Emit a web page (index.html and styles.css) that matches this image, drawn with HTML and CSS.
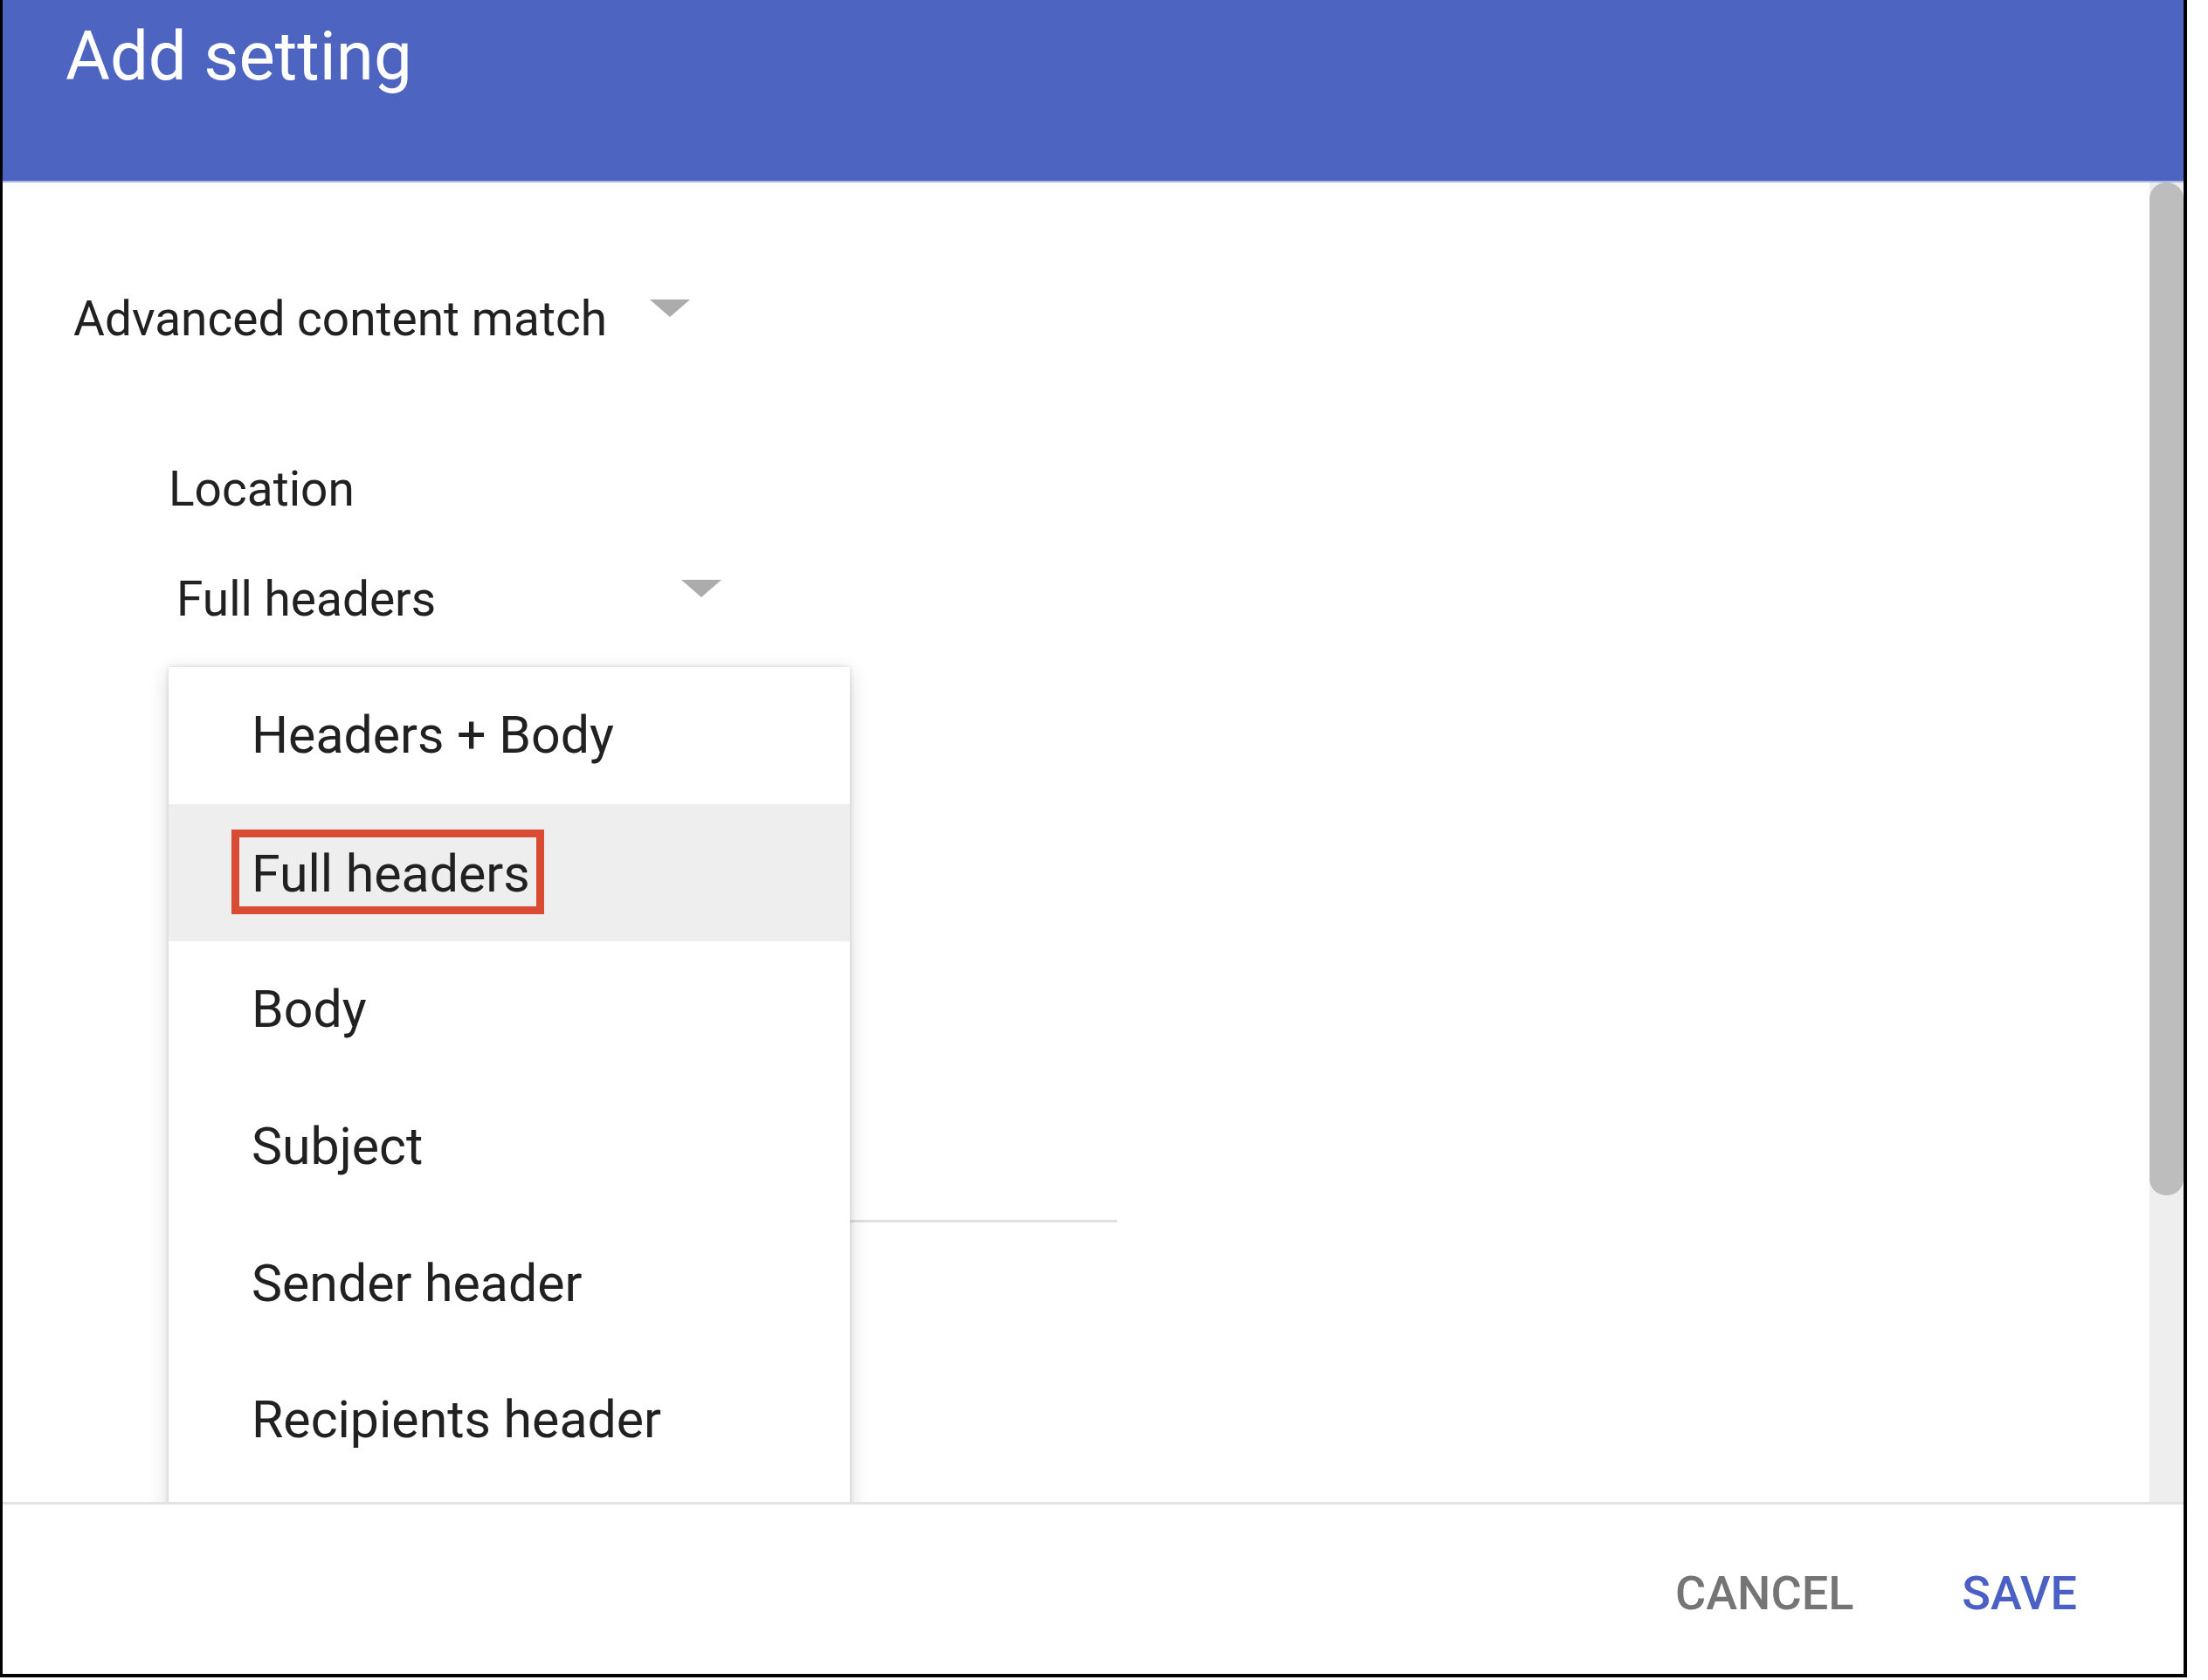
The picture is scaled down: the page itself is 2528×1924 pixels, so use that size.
FILE: index.html
```html
<!DOCTYPE html>
<html lang="en">
<head>
<meta charset="utf-8">
<title>Add setting</title>
<link rel="stylesheet" href="styles.css">
</head>
<body>
<div class="frame">
  <header class="dialog-header">
    <h1 class="dialog-title">Add setting</h1>
  </header>
  <div class="dialog-body">
    <div class="main">
      <div class="select select-top">
        <span class="select-value">Advanced content match</span>
        <span class="arrow arrow-top"></span>
      </div>
      <div class="field-label">Location</div>
      <div class="select select-location">
        <span class="select-value">Full headers</span>
        <span class="arrow"></span>
      </div>
      <div class="input-line"></div>
    </div>
    <div class="scrollbar"><div class="thumb"></div></div>
    <ul class="menu">
      <li class="menu-item">Headers + Body</li>
      <li class="menu-item selected"><span class="highlight">Full headers</span></li>
      <li class="menu-item">Body</li>
      <li class="menu-item">Subject</li>
      <li class="menu-item">Sender header</li>
      <li class="menu-item">Recipients header</li>
    </ul>
  </div>
  <footer class="dialog-footer">
    <button class="btn btn-cancel">CANCEL</button>
    <button class="btn btn-save">SAVE</button>
  </footer>
</div>
</body>
</html>
```

FILE: styles.css
```css
* { box-sizing: border-box; }
html, body { margin: 0; padding: 0; background: #ffffff; }
body {
  font-family: Roboto, "Liberation Sans", Arial, sans-serif;
  color: #212121;
  width: 2528px;
  height: 1924px;
  overflow: hidden;
}
.frame {
  width: 2504px;
  height: 1921px;
  border-left: 3px solid #000;
  border-right: 4px solid #000;
  border-bottom: 4px solid #000;
  display: flex;
  flex-direction: column;
  background: #fff;
}
.dialog-header {
  height: 209px;
  flex: 0 0 209px;
  background: #4d64c1;
  border-bottom: 2px solid #aab5e4;
  padding: 19px 0 0 72px;
}
.dialog-title {
  margin: 0;
  font-weight: 400;
  font-size: 78px;
  line-height: 92px;
  color: #ffffff;
}
.dialog-body {
  flex: 1 1 auto;
  position: relative;
  overflow: hidden;
  display: flex;
}
.main {
  flex: 1 1 auto;
  padding: 124px 0 0 81px;
  display: flex;
  flex-direction: column;
  align-items: flex-start;
}
.select {
  display: flex;
  align-items: flex-start;
}
.select-value {
  font-size: 55px;
  line-height: 64px;
}
.arrow {
  width: 0;
  height: 0;
  border-left: 23px solid transparent;
  border-right: 23px solid transparent;
  border-top: 20px solid #acacac;
  margin-top: 10px;
}
.select-top .arrow { margin-left: 49px; }
.field-label {
  margin: 131px 0 0 109px;
  font-size: 55px;
  line-height: 64px;
}
.select-location {
  margin: 62px 0 0 118px;
}
.select-location .arrow { margin-left: 281px; }
.input-line {
  margin: 679px 0 0 109px;
  width: 1086px;
  height: 3px;
  background: #e0e0e0;
}
.scrollbar {
  flex: 0 0 39px;
  width: 39px;
  background: #eeeeee;
  position: relative;
}
.thumb {
  height: 1160px;
  background: #bdbdbd;
  border-radius: 19px;
}
.menu {
  position: absolute;
  left: 190px;
  top: 555px;
  width: 780px;
  margin: 0;
  padding: 0 0 60px;
  list-style: none;
  background: #ffffff;
  box-shadow: 0 6px 22px rgba(0, 0, 0, 0.16), 0 0 5px rgba(0, 0, 0, 0.14);
}
.menu-item {
  height: 156.8px;
  display: flex;
  align-items: center;
  padding-left: 95px;
  font-size: 59px;
  line-height: 68px;
  color: #212121;
}
.menu-item.selected { background: #eeeeee; }
.highlight {
  display: inline-block;
  border: 9px solid #d94c33;
  padding: 5px 7px 0 14px;
  margin-left: -23px;
  margin-top: -2px;
  line-height: 74px;
}
.dialog-footer {
  flex: 0 0 197px;
  border-top: 3px solid #e3e3e3;
  display: flex;
  justify-content: flex-end;
  align-items: center;
  padding: 10px 122px 0 0;
  gap: 124px;
}
.btn {
  border: 0;
  background: none;
  padding: 0;
  font-family: Roboto, "Liberation Sans", Arial, sans-serif;
  font-size: 54px;
  font-weight: 500;
  line-height: 64px;
}
.btn-cancel { color: #757575; }
.btn-save { color: #4a60c4; }
```
